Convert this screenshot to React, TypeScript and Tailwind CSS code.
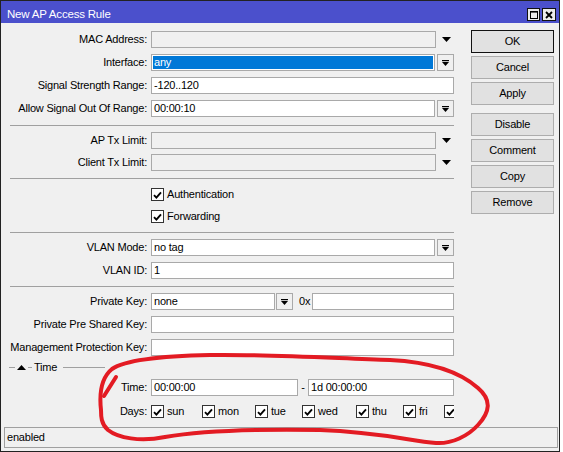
import React from "react";

const FONT = "font-['Liberation_Sans',Arial,sans-serif]";

function Field({
  className = "",
  children,
  disabled = false,
}: {
  className?: string;
  children?: React.ReactNode;
  disabled?: boolean;
}) {
  return (
    <div
      className={`h-[17px] border border-[#a9a9a9] flex items-center pl-[2px] whitespace-nowrap overflow-hidden ${
        disabled ? "bg-[#f0f0f0]" : "bg-white"
      } ${className}`}
    >
      {children}
    </div>
  );
}

function Row({
  label,
  children,
  className = "",
}: {
  label: string;
  children?: React.ReactNode;
  className?: string;
}) {
  return (
    <div className={`flex items-center h-[17px] ${className}`}>
      <div className="w-[146px] text-right whitespace-nowrap">{label}</div>
      <div className="ml-[4px] w-[303px] h-full flex items-center">{children}</div>
    </div>
  );
}

/* plain black arrow shown beside optional list fields */
function DownArrow() {
  return (
    <div className="flex-1 h-full flex items-center justify-end pr-[3px]">
      <svg width="9" height="5" viewBox="0 0 9 5">
        <path d="M0 0H9L4.5 5Z" fill="#000" />
      </svg>
    </div>
  );
}

/* boxed list button: bar over a down arrow */
function ListButton({ className = "" }: { className?: string }) {
  return (
    <div
      className={`w-[17px] h-[17px] border border-[#a9a9a9] bg-[#f0f0f0] flex items-center justify-center ${className}`}
    >
      <svg width="7" height="6" viewBox="0 0 7 6">
        <rect x="0" y="0" width="7" height="1.2" fill="#000" />
        <path d="M0 2H7L3.5 6Z" fill="#000" />
      </svg>
    </div>
  );
}

function CheckBox({ label }: { label?: string }) {
  return (
    <div className="flex items-center gap-[3px] whitespace-nowrap">
      <div className="w-[13px] h-[13px] shrink-0 border border-[#333] bg-white flex items-center justify-center">
        <svg width="9" height="8" viewBox="0 0 9 8">
          <path d="M1 4.2L3.4 6.6L8 1.4" stroke="#000" strokeWidth="1.9" fill="none" />
        </svg>
      </div>
      {label && <span>{label}</span>}
    </div>
  );
}

function Separator({ className = "" }: { className?: string }) {
  return <div className={`ml-[9px] w-[444px] h-px bg-[#a0a0a0] ${className}`} />;
}

function Btn({ label, primary = false, className = "" }: { label: string; primary?: boolean; className?: string }) {
  return (
    <div
      className={`w-[83px] h-[23px] flex items-center justify-center bg-[#e1e1e1] border ${
        primary ? "border-[#111]" : "border-[#adadad]"
      } ${className}`}
    >
      {label}
    </div>
  );
}

const days: { label?: string; w: string }[] = [
  { label: "sun", w: "w-[51px]" },
  { label: "mon", w: "w-[53px]" },
  { label: "tue", w: "w-[47px]" },
  { label: "wed", w: "w-[54px]" },
  { label: "thu", w: "w-[47px]" },
  { label: "fri", w: "w-[41px]" },
  { w: "w-[20px]" },
];

export default function App() {
  return (
    <div
      className={`relative w-[563px] h-[452px] bg-white overflow-hidden text-[11px] tracking-[-0.2px] leading-none text-black ${FONT}`}
    >
      <div className="w-[560px] h-[452px] border border-[#222] bg-[#f0f0f0] flex flex-col">
        {/* title bar */}
        <div className="h-[22px] shrink-0 bg-[#4b50cc] flex items-start text-white">
          <div className="flex-1 pl-[6px] pt-[8px] text-[11.5px]">New AP Access Rule</div>
          <div className="flex gap-[2px] pt-[7px] pr-[3px]">
            <div className="w-[13px] h-[13px] border border-[#111] bg-[#ececec] flex items-center justify-center">
              <svg width="8" height="8" viewBox="0 0 8 8">
                <rect x="0.5" y="0.5" width="7" height="7" fill="none" stroke="#000" strokeWidth="1" />
                <rect x="0" y="0" width="8" height="1.6" fill="#000" />
              </svg>
            </div>
            <div className="w-[14px] h-[13px] border border-[#111] bg-[#ececec] flex items-center justify-center">
              <svg width="8" height="8" viewBox="0 0 8 8">
                <path d="M1 1L7 7M7 1L1 7" stroke="#000" strokeWidth="1.8" />
              </svg>
            </div>
          </div>
        </div>

        {/* body */}
        <div className="flex-1 flex">
          <div className="w-[454px] flex flex-col pt-[8px]">
            <Row label="MAC Address:">
              <Field disabled className="w-[285px]" />
              <DownArrow />
            </Row>
            <Row label="Interface:" className="mt-[6px]">
              <div className="w-[284px] h-[17px] border border-[#a9a9a9] bg-white p-px">
                <div className="h-full bg-[#0078d7] text-white flex items-center pl-[1px]">any</div>
              </div>
              <ListButton className="ml-[2px]" />
            </Row>
            <Row label="Signal Strength Range:" className="mt-[6px]">
              <Field className="w-[303px]">-120..120</Field>
            </Row>
            <Row label="Allow Signal Out Of Range:" className="mt-[6px]">
              <Field className="w-[284px]">00:00:10</Field>
              <ListButton className="ml-[2px]" />
            </Row>

            <Separator className="mt-[8px]" />

            <Row label="AP Tx Limit:" className="mt-[6px]">
              <Field disabled className="w-[285px]" />
              <DownArrow />
            </Row>
            <Row label="Client Tx Limit:" className="mt-[5px]">
              <Field disabled className="w-[285px]" />
              <DownArrow />
            </Row>

            <Separator className="mt-[7px]" />

            <Row label="" className="mt-[7px]">
              <CheckBox label="Authentication" />
            </Row>
            <Row label="" className="mt-[5px]">
              <CheckBox label="Forwarding" />
            </Row>

            <Separator className="mt-[7px]" />

            <Row label="VLAN Mode:" className="mt-[6px]">
              <Field className="w-[284px]">no tag</Field>
              <ListButton className="ml-[2px]" />
            </Row>
            <Row label="VLAN ID:" className="mt-[6px]">
              <Field className="w-[303px]">1</Field>
            </Row>

            <Separator className="mt-[7px]" />

            <Row label="Private Key:" className="mt-[6px]">
              <Field className="w-[124px]">none</Field>
              <ListButton className="ml-px" />
              <div className="flex-1 pl-[6px]">0x</div>
              <Field className="w-[142px]" />
            </Row>
            <Row label="Private Pre Shared Key:" className="mt-[6px]">
              <Field className="w-[303px]" />
            </Row>
            <Row label="Management Protection Key:" className="mt-[6px]">
              <Field className="w-[303px]" />
            </Row>

            {/* collapsible group header */}
            <div className="mt-[6px] h-[11px] flex items-center">
              <div className="ml-[8px] w-[6px] h-px bg-[#a0a0a0]" />
              <svg className="ml-[2px]" width="9" height="5" viewBox="0 0 9 5">
                <path d="M0 5H9L4.5 0Z" fill="#000" />
              </svg>
              <div className="ml-[2px] w-[4px] h-px bg-[#a0a0a0]" />
              <div className="ml-[2px]">Time</div>
              <div className="ml-[6px] w-[42px] h-px bg-[#a0a0a0]" />
            </div>

            <Row label="Time:" className="mt-[6px]">
              <Field className="w-[147px]">00:00:00</Field>
              <div className="w-[10px] text-center">-</div>
              <Field className="w-[146px]">1d 00:00:00</Field>
            </Row>
            <Row label="Days:" className="mt-[7px]">
              <div className="w-[303px] h-full flex items-center overflow-hidden">
                {days.map((d, i) => (
                  <div key={i} className={`${d.w} shrink-0`}>
                    <CheckBox label={d.label} />
                  </div>
                ))}
              </div>
            </Row>
          </div>

          {/* action buttons */}
          <div className="ml-[16px] pt-[7px] flex flex-col">
            <Btn label="OK" primary />
            <Btn label="Cancel" className="mt-[3px]" />
            <Btn label="Apply" className="mt-[3px]" />
            <Btn label="Disable" className="mt-[8px]" />
            <Btn label="Comment" className="mt-[3px]" />
            <Btn label="Copy" className="mt-[3px]" />
            <Btn label="Remove" className="mt-[3px]" />
          </div>
        </div>

        {/* status bar */}
        <div className="h-[21px] shrink-0 ml-[3px] mr-[1px] mb-[3px] border border-[#a0a0a0] flex items-center pl-[2px]">
          enabled
        </div>
      </div>

      {/* red marker annotation */}
      <svg className="absolute left-0 top-0 pointer-events-none" width="563" height="452" viewBox="0 0 563 452">
        <path
          d="M 101 410 C 99 392, 101 378, 112 369 C 125 360, 160 356, 210 355 C 260 354, 330 358, 390 360 C 430 362, 460 372, 478 388 C 492 400, 490 412, 478 425 C 468 436, 452 444, 436 443 C 410 441, 380 432, 320 430 C 260 429, 200 431, 165 437 C 140 442, 118 438, 108 430 C 101 424, 101 416, 101 410"
          stroke="#e31b23"
          strokeWidth="4"
          fill="none"
          strokeLinecap="round"
          strokeLinejoin="round"
        />
        <path d="M 116 377 L 104 396" stroke="#e31b23" strokeWidth="4" fill="none" strokeLinecap="round" />
      </svg>
    </div>
  );
}
